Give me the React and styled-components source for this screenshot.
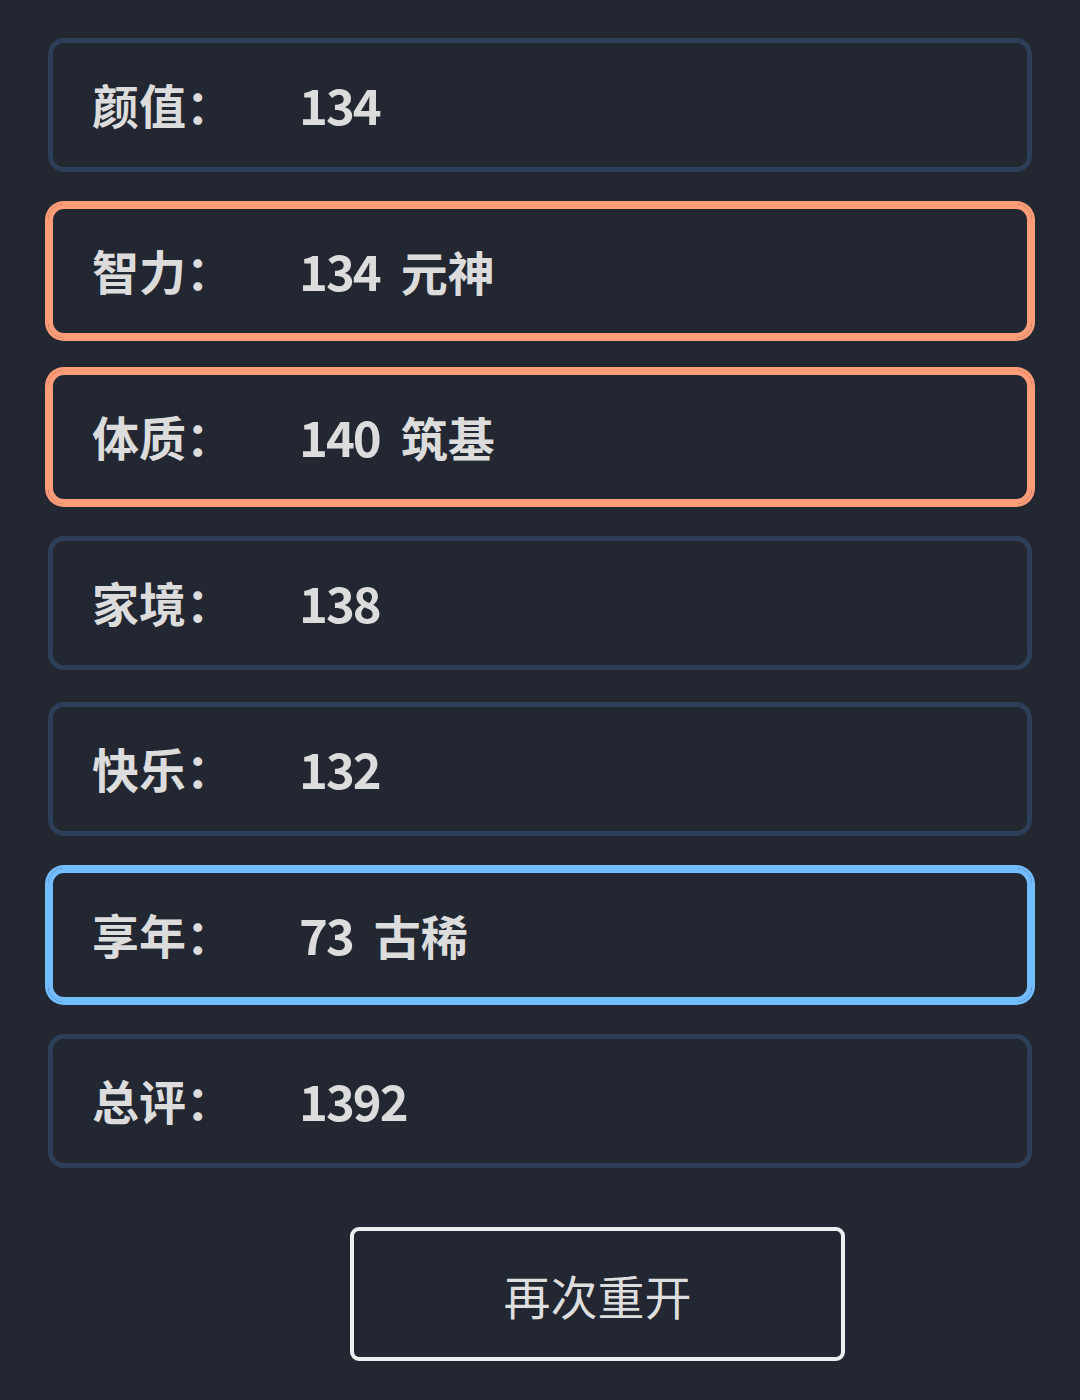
import styled, { createGlobalStyle } from 'styled-components';
import * as React from 'react';

const GlobalStyle = createGlobalStyle`
  html, body {
    margin: 0;
    padding: 0;
    background: #222731;
  }
  body {
    font-family: "Noto Sans CJK SC", "Noto Sans", sans-serif;
  }
`;

const stats = [
  { label: '颜值', value: '134' },
  { label: '智力', value: '134', grade: '元神', tone: 'orange' },
  { label: '体质', value: '140', grade: '筑基', tone: 'orange' },
  { label: '家境', value: '138' },
  { label: '快乐', value: '132' },
  { label: '享年', value: '73', grade: '古稀', tone: 'blue' },
  { label: '总评', value: '1392' },
];

const tones = {
  orange: '#ff9d79',
  blue: '#72bcff',
};

export default function App() {
  return (
    <Page>
      <GlobalStyle />
      <List>
        {stats.map((s) => (
          <Item key={s.label} tone={s.tone}>
            <Label>{s.label}：</Label>
            <Value>
              {s.value}
              {s.grade && <Grade>{s.grade}</Grade>}
            </Value>
          </Item>
        ))}
      </List>
      <Restart>再次重开</Restart>
    </Page>
  );
}

const Page = styled.div`
  width: 1080px;
  height: 1400px;
  box-sizing: border-box;
  padding: 38px 48px 0;
  display: flex;
  flex-direction: column;
`;

const List = styled.div`
  width: 100%;
  display: flex;
  flex-direction: column;
  gap: 32px;
`;

const Item = styled.div`
  height: 134px;
  box-sizing: border-box;
  border-radius: 16px;
  border: 5px solid ${(p) => (p.tone ? tones[p.tone] : '#2d3f58')};
  box-shadow: ${(p) => (p.tone ? `0 0 0 3px ${tones[p.tone]}` : 'none')};
  display: grid;
  grid-template-columns: 207px 1fr;
  align-items: center;
  padding: 0 0 4px 39px;
  color: #dcdcdc;
  font-weight: 700;
  font-size: 47px;
`;

const Label = styled.span`
  letter-spacing: 0;
`;

const Value = styled.span`
  display: flex;
  align-items: baseline;
  font-size: 49px;
  font-weight: 700;
  letter-spacing: -2px;
`;

const Grade = styled.span`
  margin-left: 21px;
  font-size: 47px;
  font-weight: 700;
  letter-spacing: 0;
`;

const Restart = styled.button`
  align-self: flex-start;
  margin-top: 59px;
  margin-left: 302px;
  width: 495px;
  height: 134px;
  box-sizing: border-box;
  background: transparent;
  border: 4px solid #eceef0;
  border-radius: 9px;
  color: #dedede;
  font-family: "Noto Sans CJK SC", sans-serif;
  font-size: 47px;
  font-weight: 400;
  cursor: pointer;
`;
